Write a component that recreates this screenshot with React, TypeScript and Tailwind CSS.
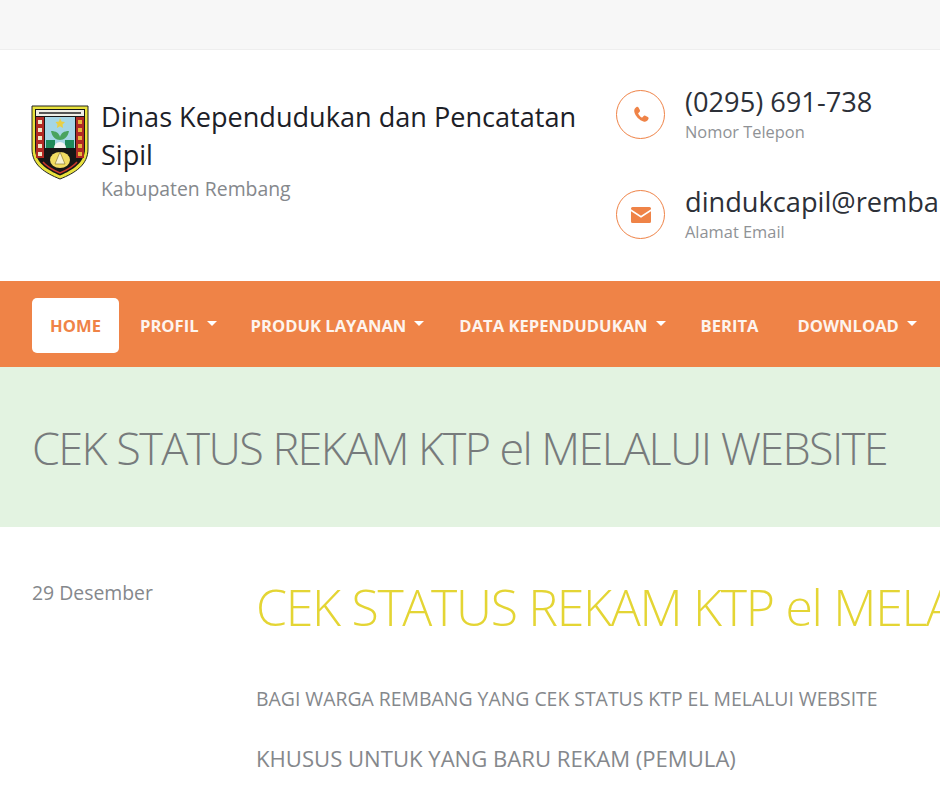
import React from 'react';

const Caret = () => (
  <span className="ml-[8px] -mr-[2px] inline-block w-0 h-0 border-x-[5px] border-x-transparent border-t-[5px] border-t-white -translate-y-[2px]" />
);

const Logo = () => (
  <svg width="58" height="75" viewBox="0 0 58 75" className="shrink-0">
    <path d="M1 1H57V44C57 60 44 68 29 74C14 68 1 60 1 44Z" fill="#e9e23c" stroke="#222" strokeWidth="1" />
    <path d="M4 4H54V44C54 57 42 65 29 70.500C16 65 4 57 4 44Z" fill="#161616" />
    <rect x="5" y="5" width="48" height="6" fill="#efefe6" />
    <rect x="8" y="7" width="42" height="2" fill="#555" />
    <rect x="5" y="12" width="8" height="41" fill="#b02a24" />
    <rect x="45" y="12" width="8" height="41" fill="#b02a24" />
    <g fill="#f1e9c8">
      <rect x="7" y="15" width="4" height="4" />
      <rect x="7" y="23" width="4" height="4" />
      <rect x="7" y="31" width="4" height="4" />
      <rect x="7" y="39" width="4" height="4" />
      <rect x="7" y="47" width="4" height="4" />
    </g>
    <g fill="#e8b53a">
      <rect x="47" y="15" width="4" height="4" />
      <rect x="47" y="23" width="4" height="4" />
      <rect x="47" y="31" width="4" height="4" />
      <rect x="47" y="39" width="4" height="4" />
      <rect x="47" y="47" width="4" height="4" />
    </g>
    <rect x="14" y="12" width="30" height="31" fill="#a5d6e6" />
    <path d="M29 13l1.500 3.500 3.500.5-2.500 2.500.6 3.500-3.100-1.700-3.100 1.700.6-3.500L24.500 17l3.500-.5Z" fill="#e9cf45" />
    <path d="M20 26c5 0 8 2 9 6c1-4 4-6 9-6c-1 6-5 9-9 9s-8-3-9-9Z" fill="#4aa35f" />
    <rect x="15" y="35" width="9" height="8" fill="#1f8a5a" />
    <rect x="34" y="35" width="9" height="8" fill="#1f8a5a" />
    <path d="M23 43a6 6 0 0 1 12 0Z" fill="#f4f4f4" />
    <ellipse cx="29" cy="55" rx="10" ry="8" fill="#f0dc62" />
    <path d="M29 47l5 12H24Z" fill="#f7f3d0" stroke="#7a6a20" strokeWidth="0.600" />
    <path d="M12 57c4 5 10 8 17 11c7-3 13-6 17-11" fill="none" stroke="#c9372c" strokeWidth="1.500" />
  </svg>
);

const Contact = ({ icon, title, label, gap }: { icon: React.ReactNode; title: string; label: string; gap: string }) => (
  <div className={`flex items-start ${gap}`}>
    <div className="mt-[2px] w-[49px] h-[49px] shrink-0 rounded-full border border-[#ef8347] flex items-center justify-center">
      {icon}
    </div>
    <div className="ml-[20px] whitespace-nowrap">
      <div className="text-[27.200px] leading-[28px] text-[#2c3038]">{title}</div>
      <div className="mt-[5px] text-[16.400px] leading-[22px] text-[#8f9296]">{label}</div>
    </div>
  </div>
);

const navItems = [
  { label: 'PROFIL', caret: true, left: 'ml-[21px]' },
  { label: 'PRODUK LAYANAN', caret: true, left: 'ml-[36px]' },
  { label: 'DATA KEPENDUDUKAN', caret: true, left: 'ml-[37px]' },
  { label: 'BERITA', caret: false, left: 'ml-[37px]' },
  { label: 'DOWNLOAD', caret: true, left: 'ml-[39px]' },
];

export default function App() {
  return (
    <div className="w-[940px] h-[788px] overflow-hidden bg-white font-['Open_Sans',sans-serif]">
      <div className="h-[50px] bg-[#f7f7f7] border-b border-[#eeeeee]" />

      <header className="h-[231px] flex pl-[31px]">
        <div className="w-[585px] shrink-0 flex items-start pt-[55px]">
          <Logo />
          <div className="ml-[12px] -mt-[7px] w-[490px]">
            <div className="text-[27.100px] leading-[38px] text-[#1c2027]">Dinas Kependudukan dan Pencatatan Sipil</div>
            <div className="mt-[1px] text-[19.400px] leading-[28px] text-[#85888c]">Kabupaten Rembang</div>
          </div>
        </div>
        <div className="pt-[38px]">
          <Contact
            gap="mb-[45px]"
            title="(0295) 691-738"
            label="Nomor Telepon"
            icon={
              <svg width="20" height="20" viewBox="0 0 24 24" fill="#ef8347">
                <path d="M6.600 2.500c.9-.5 1.900-.3 2.400.6l1.600 3c.4.800.3 1.700-.4 2.300l-1.300 1.100c-.3.300-.4.700-.2 1.100.9 1.900 2.200 3.300 4 4.300.4.200.8.100 1.100-.2l1.100-1.300c.6-.7 1.500-.9 2.300-.5l3 1.500c.9.500 1.200 1.500.7 2.400-1.200 2.300-3 3.600-5.200 3.200C9.500 18 5.600 13.700 4 8.300c-.6-2.400.5-4.500 2.600-5.800Z" />
              </svg>
            }
          />
          <Contact
            gap=""
            title="dindukcapil@rembangkab.go.id"
            label="Alamat Email"
            icon={
              <svg width="20" height="16" viewBox="0 0 20 16" fill="#ef8347">
                <path d="M1.500 0h17A1.500 1.500 0 0 1 20 1.500v.8L10 8.700 0 2.300v-.8A1.500 1.500 0 0 1 1.500 0Z" />
                <path d="M0 4.300l10 6.400 10-6.400V14.500a1.500 1.500 0 0 1-1.500 1.500h-17A1.500 1.500 0 0 1 0 14.500Z" />
              </svg>
            }
          />
        </div>
      </header>

      <nav className="h-[86px] bg-[#ef8347] flex items-center pl-[32px] text-[16.600px] font-bold text-[#fdf4ee] whitespace-nowrap">
        <a className="w-[87px] h-[55px] mt-[3px] pt-[1px] rounded-[5px] bg-white flex items-center justify-center text-[#ef8347]">HOME</a>
        {navItems.map((item) => (
          <a key={item.label} className={`${item.left} flex items-center mt-[4px]`}>
            {item.label}
            {item.caret && <Caret />}
          </a>
        ))}
      </nav>

      <div className="h-[160px] bg-[#e3f3e1] pl-[32px] flex items-center">
        <h1 className="mt-[2px] text-[45px] leading-[60px] font-light tracking-[-1.600px] text-[#777b7c] whitespace-nowrap">CEK STATUS REKAM KTP el MELALUI WEBSITE</h1>
      </div>

      <main className="flex pl-[32px] pt-[50px]">
        <div className="w-[224px] shrink-0 pt-[1px] text-[19.400px] leading-[30px] text-[#85888c]">29 Desember</div>
        <div className="whitespace-nowrap">
          <h2 className="text-[50px] leading-[60px] font-light tracking-[-1.300px] text-[#e4d534]">CEK STATUS REKAM KTP el MELALUI WEBSITE</h2>
          <p className="mt-[47px] text-[19.400px] leading-[30px] text-[#85888c]">BAGI WARGA REMBANG YANG CEK STATUS KTP EL MELALUI WEBSITE</p>
          <p className="mt-[29px] text-[22.100px] leading-[30px] text-[#85888c]">KHUSUS UNTUK YANG BARU REKAM (PEMULA)</p>
        </div>
      </main>
    </div>
  );
}
